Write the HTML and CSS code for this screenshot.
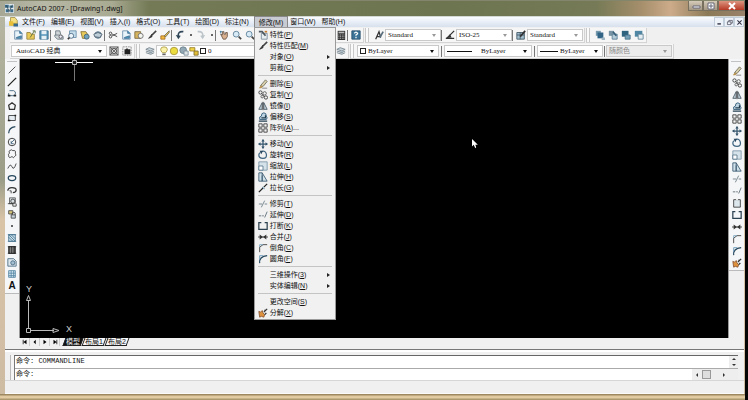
FILE: index.html
```
<!DOCTYPE html>
<html lang="zh-CN">
<head>
<meta charset="utf-8">
<title>AutoCAD 2007 - [Drawing1.dwg]</title>
<link rel="stylesheet" href="styles.css">
</head>
<body>
<svg class="defs" aria-hidden="true">
  <symbol id="new" viewBox="0 0 12 12"><path d="M2 1h6l3 3v7H2z" fill="#e8f3fa" stroke="#6a8caa"/><path d="M8 1v3h3M4 9l6-2v3H4z" fill="#4b9ac0" stroke="#456f90"/></symbol>
  <symbol id="open" viewBox="0 0 12 12"><path d="M1 3h4l1 2h4v6H1z" fill="#e9ca58" stroke="#95803a"/><path d="M5 9l5-8M8 1h3v3" stroke="#536b35" fill="none"/></symbol>
  <symbol id="save" viewBox="0 0 12 12"><path d="M1 1h10v10H1z" fill="#5494b7" stroke="#3c6d8e"/><path d="M3 1h6v4H3zM3 7h6v4H3z" fill="#e4f0f6"/></symbol>
  <symbol id="print" viewBox="0 0 12 12"><path d="M2 6V1h5l1 4M1 6h8l2 2v3H4L1 8z" fill="#d0d5d8" stroke="#65737c"/><circle cx="8" cy="8" r="2" fill="#eef" stroke="#555"/></symbol>
  <symbol id="preview" viewBox="0 0 12 12"><path d="M3 1h8v8H3z" fill="#c7dfed" stroke="#648caa"/><circle cx="5" cy="7" r="3" fill="#ecf5fb" stroke="#47657f"/><path d="M3 9l-2 2" stroke="#333" stroke-width="2"/></symbol>
  <symbol id="publish" viewBox="0 0 12 12"><path d="M1 2h6l2 3v5H3z" fill="#e8cb5a" stroke="#846f30"/><circle cx="8" cy="8" r="3" fill="#6da3bf" stroke="#445e72"/></symbol>
  <symbol id="globe" viewBox="0 0 12 12"><circle cx="6" cy="6" r="4" fill="#8ca6b7" stroke="#567188"/><path d="M1 5l5-2 5 2-3 4-6-1z" fill="#bfcfd9" stroke="#51616f"/></symbol>
  <symbol id="cut" viewBox="0 0 12 12"><path d="M11 4L5 7M11 8L5 5" stroke="#333"/><circle cx="3" cy="4" r="1.5" fill="none" stroke="#333"/><circle cx="3" cy="8" r="1.5" fill="none" stroke="#333"/></symbol>
  <symbol id="paste" viewBox="0 0 12 12"><path d="M1 2h7v8H1z" fill="#d6b35d" stroke="#786640"/><circle cx="8" cy="7" r="3" fill="#f5f5f0" stroke="#666"/></symbol>
  <symbol id="brush" viewBox="0 0 12 12"><path d="M11 1L6 6" stroke="#444" stroke-width="2"/><path d="M6 5L2 10l4-2z" fill="#333" stroke="#333"/></symbol>
  <symbol id="block" viewBox="0 0 12 12"><path d="M1 7h5v4H1z" fill="#f1ba3d" stroke="#a66b24"/><path d="M11 1L5 7l2 1 4-5z" fill="#ebc451" stroke="#665"/></symbol>
  <symbol id="undo" viewBox="0 0 12 12"><path d="M10 2Q3 1 4 8" fill="none" stroke="#30475a" stroke-width="2"/><path d="M1 6l3 5 3-4z" fill="#30475a"/></symbol>
  <symbol id="redo" viewBox="0 0 12 12"><path d="M2 2q7-1 6 6" fill="none" stroke="#bcc4ca" stroke-width="2"/><path d="M5 7l3 4 3-5z" fill="#bcc4ca"/></symbol>
  <symbol id="pan" viewBox="0 0 12 12"><path d="M2 5l2 1V2h2v3h2V3h2v5l-2 3H5z" fill="#d8b08d" stroke="#665448"/><path d="M1 2h3M2 1v3" stroke="#3c7899"/></symbol>
  <symbol id="zoom" viewBox="0 0 12 12"><circle cx="5" cy="5" r="3.5" fill="#d7eaf5" stroke="#577b94"/><path d="M8 8l3 3" stroke="#444" stroke-width="2"/></symbol>
  <symbol id="calc" viewBox="0 0 12 12"><path d="M2 1h9v11H2z" fill="#333"/><path d="M3 3h7" stroke="#bbb" stroke-width="2"/><path d="M3 6h7M3 8h7M3 10h7" stroke="#ddd" stroke-dasharray="1 1"/></symbol>
  <symbol id="help" viewBox="0 0 12 12"><path d="M1 1h10v10H1z" fill="#3b7398" stroke="#274e6b"/><path d="M4 4q2-3 4 0 0 1-2 2v1M6 8v2" fill="none" stroke="#fff" stroke-width="1.5"/></symbol>
  <symbol id="style" viewBox="0 0 12 12"><path d="M2 11L6 2l2 7M3 8h4" fill="none" stroke="#333" stroke-width="1.5"/><path d="M11 2L7 9" stroke="#556b79" stroke-width="2"/></symbol>
  <symbol id="dim" viewBox="0 0 12 12"><path d="M11 1L5 7M1 10h10" stroke="#333" stroke-width="1.5"/><path d="M1 10l5-5 2 4z" fill="#333"/></symbol>
  <symbol id="tstyle" viewBox="0 0 12 12"><path d="M1 3h9v8H1zM1 6h9M5 3v8" fill="#a3bfce" stroke="#3d5361"/><path d="M11 1L5 8" stroke="#333" stroke-width="2"/></symbol>
  <symbol id="order1" viewBox="0 0 12 12"><path d="M1 1h6v6H1z" fill="#7599ad"/><path d="M3 3h7v7H3z" fill="#326486"/><path d="M8 9h4v3H8z" fill="#9fb5c1"/></symbol>
  <symbol id="order2" viewBox="0 0 12 12"><path d="M1 1h6v6H1z" fill="#7894a4"/><path d="M5 5h6v6H5z" fill="#b4cbd8" stroke="#547991"/><path d="M6 2l4 5" stroke="#355e79" stroke-width="2"/></symbol>
  <symbol id="order3" viewBox="0 0 12 12"><path d="M1 1h8v7H1z" fill="#2e627f"/><path d="M5 6h6v5H5z" fill="#75a0b7" stroke="#456d87"/></symbol>
  <symbol id="order4" viewBox="0 0 12 12"><path d="M1 1h9v7H1z" fill="#4f87a5"/><path d="M5 5h6v6H5z" fill="#e4edf1" stroke="#5b8095"/></symbol>
  <symbol id="gear" viewBox="0 0 12 12"><path d="M1 1h10v10H1z" fill="#bbb" stroke="#666"/><circle cx="6" cy="6" r="3" fill="#eee" stroke="#333"/><path d="M1 1l10 10M11 1L1 11" stroke="#555"/></symbol>
  <symbol id="wsave" viewBox="0 0 12 12"><path d="M1 1h10v10H1z" fill="none" stroke="#555" stroke-dasharray="1 1"/><path d="M3 4h2V3h2v1h3v6H3z" fill="#222"/></symbol>
  <symbol id="layers" viewBox="0 0 12 12"><path d="M1 4l4-2 6 2-4 2zM1 6l6 2 4-2M1 8l6 2 4-2" fill="#c8d4db" stroke="#73828c"/></symbol>
  <symbol id="bulb" viewBox="0 0 12 12"><path d="M4 8Q2 6 2 4q0-3 4-3t4 3q0 2-2 4z" fill="#fbf2a9" stroke="#a69843"/><path d="M4 10h4" stroke="#666" stroke-width="2"/></symbol>
  <symbol id="sun" viewBox="0 0 12 12"><circle cx="6" cy="6" r="4.5" fill="#eadb40" stroke="#a59335"/></symbol>
  <symbol id="freeze" viewBox="0 0 12 12"><circle cx="5" cy="5" r="4" fill="#93a9b5" stroke="#6b7f89"/><path d="M6 6h5v5H6z" fill="#dde4e8" stroke="#7a8d98"/></symbol>
  <symbol id="lock" viewBox="0 0 12 12"><path d="M1 2h6v4H1z" fill="#f0d547" stroke="#987b26"/><path d="M6 6h5v5H6z" fill="#e1bd39" stroke="#7c6a2a"/></symbol>
  <symbol id="line" viewBox="0 0 12 12"><path d="M2 10l8-8" stroke="#333"/></symbol>
  <symbol id="xline" viewBox="0 0 12 12"><path d="M1 11L11 1" stroke="#222" stroke-width="1.5"/></symbol>
  <symbol id="pline" viewBox="0 0 12 12"><path d="M3 2h5q3 1 2 4T7 8H2V5" fill="none" stroke="#345a75"/><path d="M1 8h3M8 8h3" stroke="#222" stroke-width="2"/></symbol>
  <symbol id="poly" viewBox="0 0 12 12"><path d="M6 2l4 3-1 5H3L2 5z" fill="none" stroke="#333" stroke-width="1.5"/></symbol>
  <symbol id="rect" viewBox="0 0 12 12"><path d="M2 3h8v6H2z" fill="#e5edf2" stroke="#333"/><path d="M1 9h3M9 3h2" stroke="#222" stroke-width="2"/></symbol>
  <symbol id="arc" viewBox="0 0 12 12"><path d="M2 10Q2 3 10 2" fill="none" stroke="#29485d" stroke-width="1.5"/></symbol>
  <symbol id="circle" viewBox="0 0 12 12"><circle cx="6" cy="6" r="4.5" fill="none" stroke="#222"/><path d="M5 7l4-4M5 5v3h3" stroke="#345a75" fill="none"/></symbol>
  <symbol id="cloud" viewBox="0 0 12 12"><path d="M3 2q3-2 4 0 4-1 3 3 2 3-1 4-1 3-3 0-4 3-4-1-1-2 1-3-1-2 0-3z" fill="none" stroke="#333"/></symbol>
  <symbol id="spline" viewBox="0 0 12 12"><path d="M1 9q3-7 5-2t5-4" fill="none" stroke="#333"/></symbol>
  <symbol id="ellipse" viewBox="0 0 12 12"><ellipse cx="6" cy="6" rx="4.5" ry="3" fill="none" stroke="#24465d" stroke-width="1.5"/></symbol>
  <symbol id="earc" viewBox="0 0 12 12"><path d="M1 7q0-4 5-4t5 3q0 3-4 3" fill="none" stroke="#333" stroke-width="1.5"/><path d="M3 7h2v3" stroke="#333" fill="none"/></symbol>
  <symbol id="insert" viewBox="0 0 12 12"><path d="M3 1h7v7H3z" fill="#d8dfe3" stroke="#555"/><circle cx="7" cy="5" r="2.5" fill="none" stroke="#333"/><path d="M1 8h6v3M7 11h4V8" fill="none" stroke="#333"/></symbol>
  <symbol id="make" viewBox="0 0 12 12"><path d="M2 2h5v4H2z" fill="#d5c378" stroke="#444"/><circle cx="8" cy="6" r="2" fill="none" stroke="#333"/><path d="M5 7h5v4H5z" fill="#c7d2d9" stroke="#444"/></symbol>
  <symbol id="dot" viewBox="0 0 12 12"><circle cx="6" cy="6" r="1.2" fill="#333"/></symbol>
  <symbol id="hatch" viewBox="0 0 12 12"><path d="M2 2h8v8H2z" fill="#c9dfeb" stroke="#47738f"/><path d="M2 5l5 5M2 2l8 8M5 2l5 5M1 2h10M1 10h10" stroke="#47738f"/></symbol>
  <symbol id="grad" viewBox="0 0 12 12"><path d="M2 2h8v8H2z" fill="#444" stroke="#222"/><path d="M4 2v8M7 2v8" stroke="#999"/><path d="M1 2h10M1 10h10" stroke="#222"/></symbol>
  <symbol id="region" viewBox="0 0 12 12"><path d="M1 2h7l3 3v6H1z" fill="#dce7ee" stroke="#47687e"/><circle cx="7" cy="7" r="2.5" fill="#a3bfd1" stroke="#47687e"/></symbol>
  <symbol id="table" viewBox="0 0 12 12"><path d="M2 2h8v8H2zM2 5h8M2 8h8M5 2v8M8 2v8" fill="#d9eaf4" stroke="#4f82a1"/></symbol>
  <symbol id="erase" viewBox="0 0 12 12"><path d="M9 1l2 2-5 6-3-1z" fill="#d9d1a9" stroke="#6e6a5c"/><path d="M3 8l3 1-2 2H1z" fill="#b6914e"/><path d="M5 11h6" stroke="#777"/></symbol>
  <symbol id="copy" viewBox="0 0 12 12"><path d="M4 4l4 4" stroke="#555"/><circle cx="3" cy="3" r="2" fill="none" stroke="#333"/><circle cx="8" cy="4" r="2" fill="none" stroke="#555"/><circle cx="5" cy="8" r="1.5" fill="none" stroke="#555"/><circle cx="9.500" cy="9" r="2" fill="none" stroke="#333"/></symbol>
  <symbol id="mirror" viewBox="0 0 12 12"><path d="M5 2v8H1zM7 2v8h4z" fill="#c5d2db" stroke="#445662"/><path d="M6 1v10" stroke="#333"/></symbol>
  <symbol id="offset" viewBox="0 0 12 12"><path d="M2 9q-1-4 2-4 0-4 3-4t3 4q2 2 0 4z" fill="#bfd5e3" stroke="#2c5572"/><path d="M4 7h5V4M1 11h10" fill="none" stroke="#243e50" stroke-width="1.5"/></symbol>
  <symbol id="array" viewBox="0 0 12 12"><path d="M1 1h4v4H1zM7 1h4v4H7zM1 7h4v4H1zM7 7h4v4H7z" fill="none" stroke="#333"/></symbol>
  <symbol id="move" viewBox="0 0 12 12"><path d="M6 1v10M1 6h10" stroke="#37576e" stroke-width="1.500"/><path d="M6 0l2 3H4zM6 12l2-3H4zM0 6l3-2v4zM12 6L9 4v4z" fill="#37576e"/></symbol>
  <symbol id="rotate" viewBox="0 0 12 12"><path d="M4 2q5-2 6 3t-4 5-5-4q0-2 2-3" fill="none" stroke="#3e6580" stroke-width="1.500"/><path d="M2 1h4L4 5z" fill="#28495f"/></symbol>
  <symbol id="scale" viewBox="0 0 12 12"><path d="M1 1h10v10H1z" fill="#d6e2ea" stroke="#7894a5"/><path d="M1 6h5v5H1z" fill="#fff" stroke="#56758a"/></symbol>
  <symbol id="stretch" viewBox="0 0 12 12"><path d="M1 1h4v10H1zM5 1l6 10H5V4" fill="#d1e1ea" stroke="#35566c"/></symbol>
  <symbol id="lengthen" viewBox="0 0 12 12"><path d="M1 11l5-5M7 5l4-4" stroke="#222" stroke-width="1.500"/><path d="M5 5l3 2" stroke="#4179a0"/></symbol>
  <symbol id="trim" viewBox="0 0 12 12"><path d="M1 6h4M8 6h3M4 10l4-8" stroke="#667782"/></symbol>
  <symbol id="extend" viewBox="0 0 12 12"><path d="M1 7h3M5 7h2M8 9l3-7" stroke="#536470"/></symbol>
  <symbol id="breakpt" viewBox="0 0 12 12"><path d="M2 2h8v9H2z" fill="#dce7ed" stroke="#333"/><path d="M5 2h2" stroke="#fff" stroke-width="1.500"/></symbol>
  <symbol id="break" viewBox="0 0 12 12"><path d="M4 2H1v8h10V2H8" fill="none" stroke="#2d4250" stroke-width="1.500"/></symbol>
  <symbol id="join" viewBox="0 0 12 12"><path d="M0 6h12" stroke="#333"/><path d="M2 3l4 3-4 3zM10 3L6 6l4 3z" fill="#333"/></symbol>
  <symbol id="chamfer" viewBox="0 0 12 12"><path d="M2 11V5l4-3h5" fill="none" stroke="#333"/><path d="M2 5V2h4" fill="none" stroke="#72a0bd"/></symbol>
  <symbol id="fillet" viewBox="0 0 12 12"><path d="M2 11Q1 3 11 2" fill="none" stroke="#26485d" stroke-width="1.500"/><path d="M2 7V2h4" fill="none" stroke="#5c91b5"/></symbol>
  <symbol id="explode" viewBox="0 0 12 12"><path d="M1 4l2 1 2-2 1 3 2 2-1 3-3-1-2 1z" fill="#df923e" stroke="#865332"/><path d="M7 5l4-4M8 8l2-2M8 2l1 2" stroke="#333" stroke-width="1.500"/></symbol>
  <symbol id="props" viewBox="0 0 12 12"><path d="M4 4h7v7H4z" fill="#e9eef1" stroke="#748796"/><path d="M1 2h4l4 5" fill="none" stroke="#4e5860" stroke-width="2"/><path d="M8 2h3" stroke="#c87b31" stroke-width="2"/></symbol>
</svg>

<div class="window">
  <header class="title">
    <svg class="app" viewBox="0 0 12 12" aria-hidden="true"><path d="M0 0h12v12H0z" fill="#e0e8ec"/><path d="M0 1h5v4H0zM6 2h5v3H6zM1 7h4v4H1zM7 7h4v4H7z" fill="#3a6c8a"/><path d="M2 2l3 7M10 1L5 11" stroke="#283d4c"/></svg>
    <h1>AutoCAD 2007 - [Drawing1.dwg]</h1>
    <div class="winbtns">
      <button aria-label="最小化"><svg viewBox="0 0 12 8"><path d="M3 4h7v2H3z" fill="#fff" stroke="#667"/></svg></button>
      <button aria-label="还原"><svg viewBox="0 0 12 8"><path d="M3 1h6v6H3zM5 3h2v2H5z" fill="#fff" stroke="#667"/></svg></button>
      <button class="close" aria-label="关闭"><svg viewBox="0 0 12 8"><path d="M3 1l6 6M9 1L3 7" stroke="#fff" stroke-width="2"/></svg></button>
    </div>
  </header>

  <div class="frame">
    <nav class="menubar">
      <svg class="doc" viewBox="0 0 12 12" aria-hidden="true"><path d="M2 0h6l3 4v6H2z" fill="#f3df82" stroke="#9a8740"/><path d="M0 5h5l1 2h5v4H0z" fill="#e8bf37"/><path d="M6 8h6v4H6z" fill="#38698a"/></svg>
      <button>文件(F)</button><button>编辑(E)</button><button>视图(V)</button><button>插入(I)</button><button>格式(O)</button><button>工具(T)</button><button>绘图(D)</button><button>标注(N)</button>
      <div class="opened">
        <button class="active" aria-expanded="true">修改(M)</button>
        <div class="menu" role="menu">
          <button role="menuitem"><svg><use href="#props"/></svg><span>特性(<u>P</u>)</span></button>
          <button role="menuitem"><svg><use href="#brush"/></svg><span>特性匹配(<u>M</u>)</span></button>
          <button role="menuitem" class="sub"><span>对象(<u>O</u>)</span></button>
          <button role="menuitem" class="sub"><span>剪裁(<u>C</u>)</span></button>
          <hr>
          <button role="menuitem"><svg><use href="#erase"/></svg><span>删除(<u>E</u>)</span></button>
          <button role="menuitem"><svg><use href="#copy"/></svg><span>复制(<u>Y</u>)</span></button>
          <button role="menuitem"><svg><use href="#mirror"/></svg><span>镜像(<u>I</u>)</span></button>
          <button role="menuitem"><svg><use href="#offset"/></svg><span>偏移(<u>S</u>)</span></button>
          <button role="menuitem"><svg><use href="#array"/></svg><span>阵列(<u>A</u>)...</span></button>
          <hr>
          <button role="menuitem"><svg><use href="#move"/></svg><span>移动(<u>V</u>)</span></button>
          <button role="menuitem"><svg><use href="#rotate"/></svg><span>旋转(<u>R</u>)</span></button>
          <button role="menuitem"><svg><use href="#scale"/></svg><span>缩放(<u>L</u>)</span></button>
          <button role="menuitem"><svg><use href="#stretch"/></svg><span>拉伸(<u>H</u>)</span></button>
          <button role="menuitem"><svg><use href="#lengthen"/></svg><span>拉长(<u>G</u>)</span></button>
          <hr>
          <button role="menuitem"><svg><use href="#trim"/></svg><span>修剪(<u>T</u>)</span></button>
          <button role="menuitem"><svg><use href="#extend"/></svg><span>延伸(<u>D</u>)</span></button>
          <button role="menuitem"><svg><use href="#break"/></svg><span>打断(<u>K</u>)</span></button>
          <button role="menuitem"><svg><use href="#join"/></svg><span>合并(<u>J</u>)</span></button>
          <button role="menuitem"><svg><use href="#chamfer"/></svg><span>倒角(<u>C</u>)</span></button>
          <button role="menuitem"><svg><use href="#fillet"/></svg><span>圆角(<u>F</u>)</span></button>
          <hr>
          <button role="menuitem" class="sub"><span>三维操作(<u>3</u>)</span></button>
          <button role="menuitem" class="sub"><span>实体编辑(<u>N</u>)</span></button>
          <hr>
          <button role="menuitem"><span>更改空间(<u>S</u>)</span></button>
          <button role="menuitem"><svg><use href="#explode"/></svg><span>分解(<u>X</u>)</span></button>
        </div>
      </div>
      <button>窗口(W)</button><button>帮助(H)</button>
      <div class="docbtns">
        <button aria-label="最小化文档"><svg viewBox="0 0 10 10"><path d="M2 7h5" stroke="#334" stroke-width="2"/></svg></button>
        <button aria-label="还原文档"><svg viewBox="0 0 10 10"><path d="M4 4V2h5v4H7M2 4h5v4H2z" fill="none" stroke="#445"/></svg></button>
        <button aria-label="关闭文档"><svg viewBox="0 0 10 10"><path d="M2 2l6 6M8 2L2 8" stroke="#334" stroke-width="1.500"/></svg></button>
      </div>
    </nav>

    <div class="row">
      <div class="bar standard">
        <button aria-label="新建"><svg><use href="#new"/></svg></button><button aria-label="打开"><svg><use href="#open"/></svg></button><button aria-label="保存"><svg><use href="#save"/></svg></button><i></i>
        <button aria-label="打印"><svg><use href="#print"/></svg></button><button aria-label="打印预览"><svg><use href="#preview"/></svg></button><button aria-label="发布"><svg><use href="#publish"/></svg></button><button aria-label="三维 DWF"><svg><use href="#globe"/></svg></button><i></i>
        <button aria-label="剪切"><svg><use href="#cut"/></svg></button><button aria-label="复制"><svg><use href="#new"/></svg></button><button aria-label="粘贴"><svg><use href="#paste"/></svg></button><button aria-label="特性匹配"><svg><use href="#brush"/></svg></button><button aria-label="块编辑器"><svg><use href="#block"/></svg></button><i></i>
        <button aria-label="放弃"><svg><use href="#undo"/></svg></button><button class="drop" aria-label="放弃列表"><svg><use href="#dot"/></svg></button><button aria-label="重做"><svg><use href="#redo"/></svg></button><button class="drop" aria-label="重做列表"><svg><use href="#dot"/></svg></button><i></i>
        <button aria-label="平移"><svg><use href="#pan"/></svg></button><button aria-label="实时缩放"><svg><use href="#zoom"/></svg></button><button aria-label="窗口缩放"><svg><use href="#zoom"/></svg></button><button aria-label="缩放上一个"><svg><use href="#zoom"/></svg></button><button aria-label="特性"><svg><use href="#props"/></svg></button><button aria-label="设计中心"><svg><use href="#table"/></svg></button><button aria-label="工具选项板"><svg><use href="#region"/></svg></button><button aria-label="图纸集"><svg><use href="#preview"/></svg></button><button aria-label="标记集"><svg><use href="#paste"/></svg></button><button aria-label="计算器"><svg><use href="#calc"/></svg></button><i></i>
        <button aria-label="帮助"><svg><use href="#help"/></svg></button>
      </div>
      <div class="bar grip">
        <button aria-label="文字样式管理"><svg><use href="#style"/></svg></button><span class="combo"><select aria-label="文字样式"><option>Standard</option></select></span><i></i>
        <button aria-label="标注样式管理"><svg><use href="#dim"/></svg></button><span class="combo"><select aria-label="标注样式"><option>ISO-25</option></select></span><i></i>
        <button aria-label="表格样式管理"><svg><use href="#tstyle"/></svg></button><span class="combo"><select aria-label="表格样式"><option>Standard</option></select></span>
      </div>
      <div class="bar grip">
        <button aria-label="前置"><svg><use href="#order1"/></svg></button><button aria-label="后置"><svg><use href="#order2"/></svg></button><button aria-label="置于对象之上"><svg><use href="#order3"/></svg></button><button aria-label="置于对象之下"><svg><use href="#order4"/></svg></button>
      </div>
    </div>

    <div class="row">
      <div class="bar">
        <span class="combo strong workspace"><select aria-label="工作空间"><option>AutoCAD 经典</option></select></span>
        <button aria-label="工作空间设置"><svg><use href="#gear"/></svg></button><button aria-label="我的工作空间"><svg><use href="#wsave"/></svg></button>
      </div>
      <div class="bar grip">
        <button aria-label="图层特性"><svg><use href="#layers"/></svg></button>
        <span class="combo strong layer"><svg><use href="#bulb"/></svg><svg><use href="#sun"/></svg><svg><use href="#freeze"/></svg><svg><use href="#lock"/></svg><b class="swatch"></b><select aria-label="图层"><option>0</option></select></span>
        <button aria-label="上一个图层"><svg><use href="#layers"/></svg></button>
      </div>
      <div class="bar grip">
        <span class="combo strong color"><b class="swatch"></b><select aria-label="颜色"><option>ByLayer</option></select></span><i></i>
        <span class="combo strong linetype"><b class="rule"></b><select aria-label="线型"><option>ByLayer</option></select></span><i></i>
        <span class="combo strong weight"><b class="rule"></b><select aria-label="线宽"><option>ByLayer</option></select></span><i></i>
        <span class="combo off"><select aria-label="打印样式" disabled><option>随颜色</option></select></span>
      </div>
    </div>

    <main class="work">
      <aside class="tools">
        <button aria-label="直线"><svg><use href="#line"/></svg></button><button aria-label="构造线"><svg><use href="#xline"/></svg></button><button aria-label="多段线"><svg><use href="#pline"/></svg></button><button aria-label="正多边形"><svg><use href="#poly"/></svg></button><button aria-label="矩形"><svg><use href="#rect"/></svg></button><button aria-label="圆弧"><svg><use href="#arc"/></svg></button><button aria-label="圆"><svg><use href="#circle"/></svg></button><button aria-label="修订云线"><svg><use href="#cloud"/></svg></button><button aria-label="样条曲线"><svg><use href="#spline"/></svg></button><button aria-label="椭圆"><svg><use href="#ellipse"/></svg></button><button aria-label="椭圆弧"><svg><use href="#earc"/></svg></button><button aria-label="插入块"><svg><use href="#insert"/></svg></button><button aria-label="创建块"><svg><use href="#make"/></svg></button><button aria-label="点"><svg><use href="#dot"/></svg></button><button aria-label="图案填充"><svg><use href="#hatch"/></svg></button><button aria-label="渐变色"><svg><use href="#grad"/></svg></button><button aria-label="面域"><svg><use href="#region"/></svg></button><button aria-label="表格"><svg><use href="#table"/></svg></button><button class="text" aria-label="多行文字">A</button>
      </aside>
      <section class="center">
        <div class="canvas">
          <svg class="cross" viewBox="0 0 38 24" aria-hidden="true"><path d="M0 3.500h38" stroke="#fff"/><path d="M19.500 0v22" stroke="#777"/><path d="M17.500 1.500h4v4h-4z" fill="#222" stroke="#bbb"/></svg>
          <svg class="pointer" viewBox="0 0 8 12" aria-hidden="true"><path d="M1 0v9l2-2 2 4 1-1-1-3h3z" fill="#fff"/></svg>
          <div class="ucs">
            <span>Y</span>
            <svg viewBox="0 0 36 40" aria-hidden="true"><path d="M3.500 34V7M6 36.500h23M1.500 34.500h4v4h-4zM3.500 1.500l-2 5h4zM34 36.500l-6-2v4z" fill="none" stroke="#bbb"/></svg>
            <span>X</span>
          </div>
        </div>
        <div class="tabs">
          <button class="step" aria-label="第一个"><svg viewBox="0 0 8 8"><path d="M1 1h1v6H1zM6 1v6L2 4z"/></svg></button>
          <button class="step" aria-label="上一个"><svg viewBox="0 0 8 8"><path d="M5 1v6L2 4z"/></svg></button>
          <button class="step" aria-label="下一个"><svg viewBox="0 0 8 8"><path d="M2 1v6l4-3z"/></svg></button>
          <button class="step" aria-label="最后一个"><svg viewBox="0 0 8 8"><path d="M6 1h1v6H6zM2 1v6l4-3z"/></svg></button>
          <button class="tab on">模型</button><button class="tab">布局1</button><button class="tab">布局2</button>
        </div>
      </section>
      <aside class="tools right">
        <button aria-label="删除"><svg><use href="#erase"/></svg></button><button aria-label="复制对象"><svg><use href="#copy"/></svg></button><button aria-label="镜像"><svg><use href="#mirror"/></svg></button><button aria-label="偏移"><svg><use href="#offset"/></svg></button><button aria-label="阵列"><svg><use href="#array"/></svg></button><button aria-label="移动"><svg><use href="#move"/></svg></button><button aria-label="旋转"><svg><use href="#rotate"/></svg></button><button aria-label="缩放"><svg><use href="#scale"/></svg></button><button aria-label="拉伸"><svg><use href="#stretch"/></svg></button><button aria-label="修剪"><svg><use href="#trim"/></svg></button><button aria-label="延伸"><svg><use href="#extend"/></svg></button><button aria-label="打断于点"><svg><use href="#breakpt"/></svg></button><button aria-label="打断"><svg><use href="#break"/></svg></button><button aria-label="合并"><svg><use href="#join"/></svg></button><button aria-label="倒角"><svg><use href="#chamfer"/></svg></button><button aria-label="圆角"><svg><use href="#fillet"/></svg></button><button aria-label="分解"><svg><use href="#explode"/></svg></button>
      </aside>
    </main>

    <section class="command">
      <div class="lines">
        <div class="history"><p>命令: COMMANDLINE</p><div class="vscroll"><button aria-label="向上滚动"></button><button class="down" aria-label="向下滚动"></button></div></div>
        <div class="prompt"><label for="cmd">命令:</label><input id="cmd" type="text" autocomplete="off"><div class="hscroll"><button aria-label="向左滚动"></button><span></span><button class="fwd" aria-label="向右滚动"></button></div></div>
      </div>
    </section>
    <footer class="status"></footer>
  </div>
</div>
</body>
</html>
```

FILE: styles.css
```
* { box-sizing: border-box; }
body {
  margin: 0;
  background: #050505;
  color: #111;
  font: 7px/10px "Liberation Sans", "Noto Sans CJK SC", sans-serif;
}
button, select, input {
  margin: 0;
  padding: 0;
  border: 0;
  border-radius: 0;
  background: none;
  color: inherit;
  font: inherit;
}
h1, p { margin: 0; font: inherit; }
svg { display: block; }
.defs { position: absolute; width: 0; height: 0; }

.window {
  display: flex;
  flex-direction: column;
  height: 100vh;
  margin-right: 3px;
  padding: 0 1px 6px 5px;
  background:
    linear-gradient(#8d7850, #f0d9b0 50%, #a08c62) bottom / 100% 6px no-repeat,
    linear-gradient(#b9b9a5, #9b9d87 45%, #d9c4a8 55%, #cdbba2);
}

/* Title bar */
.title {
  display: flex;
  align-items: center;
  flex: none;
  height: 17px;
  margin: 0 -1px 0 -5px;
  padding-left: 5px;
  border-top: 1px solid #84866c;
  border-bottom: 1px solid #d3d8d4;
  background: linear-gradient(90deg, #a6a895, #b7b8a5 6%, #a9aa92 15%, #737a55 20%, #6c7450 60%, #767a56 80%, #a58e6b 86%, #ccab8a 90%, #8b7a58 95%, #99826a);
}
.app { width: 9px; height: 9px; }
.title h1 {
  flex: 1;
  padding-left: 3px;
  color: #111;
  font-family: "Noto Sans", sans-serif;
}
.winbtns { display: flex; align-self: flex-start; }
.winbtns button {
  display: grid;
  place-items: center;
  width: 15px;
  height: 10px;
  border: 1px solid #77705f;
  border-top: 0;
  background: linear-gradient(#d5cbb9, #a49883);
}
.winbtns .close { width: 27px; background: linear-gradient(#dc9480, #b83a25); }
.winbtns svg { width: 12px; height: 8px; }

.frame {
  display: flex;
  flex: 1;
  flex-direction: column;
  min-height: 0;
  background: #f0f0f0;
}

/* Menu bar */
.menubar {
  display: flex;
  flex: none;
  height: 10px;
  padding-left: 4px;
  background: linear-gradient(#fafcfe, #d7e0ee);
}
.doc { width: 9px; height: 10px; margin-right: 1px; }
.menubar button { padding: 0 3px; white-space: nowrap; }
.opened { position: relative; margin-left: 3px; }
.menubar .active {
  height: 10px;
  padding: 0 4px;
  line-height: 9px;
  outline: 1px solid #888;
  background: #c8ccd2;
}
.docbtns { display: flex; margin-left: auto; }
.docbtns button {
  display: grid;
  place-items: center;
  width: 10px;
  padding: 0;
  border: 1px solid #c3cedb;
  background: #eef3fa;
}
.docbtns svg { width: 7px; height: 7px; }

.menu {
  position: absolute;
  z-index: 5;
  top: 100%;
  left: -1px;
  width: 82px;
  padding: 1px 2px;
  border: 1px solid #9a9a9a;
  background: #f1f1f1;
}
.menu button {
  display: grid;
  grid-template-columns: 10px 1fr 5px;
  align-items: center;
  column-gap: 2px;
  width: 100%;
  height: 11px;
  padding: 0 1px;
  line-height: 11px;
  text-align: left;
}
.menu span { grid-column: 2; }
.menu svg { width: 10px; height: 10px; }
.sub::after {
  content: "";
  grid-column: 3;
  justify-self: start;
  border: 2px solid transparent;
  border-left: 3px solid #222;
  border-right: 0;
}
.menu hr {
  height: 1px;
  margin: 2px 1px;
  border: 0;
  background: #c4c4c4;
}

/* Toolbars */
.row { display: flex; flex: none; gap: 1px; height: 16px; padding-left: 5px; }
.bar {
  display: flex;
  align-items: center;
  height: 15px;
  margin-top: 1px;
  padding: 0 1px;
  border: 1px solid #d4d4d4;
  border-width: 0 1px 1px 0;
  background: #f6f6f6;
}
.grip { padding-left: 6px; border-left: 1px solid #c8c8c8; box-shadow: inset 2px 0 #fafafa, inset 3px 0 #c8c8c8; }
.bar button { display: grid; flex: none; place-items: center; width: 13px; height: 13px; }
.bar button svg, .combo svg { width: 10px; height: 10px; }
.bar .drop { width: 8px; }
.bar i { flex: none; width: 1px; height: 11px; margin: 0 1px 0 0; background: #777; }
.combo {
  display: flex;
  align-items: center;
  width: 56px;
  height: 12px;
  padding: 0 4px 0 2px;
  border: 1px solid #c9c9c9;
  background: #fff;
  font-family: "Liberation Serif", "Noto Sans CJK SC", serif;
}
.combo select { flex: 1; min-width: 0; height: 10px; appearance: none; opacity: 1; }
.combo::after {
  content: "";
  border: 2px solid transparent;
  border-top: 3px solid #999;
  border-bottom: 0;
}
.strong::after { border-top-color: #111; }
.bar .workspace { width: 96px; padding-left: 4px; }
.bar .layer { width: 178px; }
.bar .color { width: 82px; margin-right: 2px; }
.bar .linetype { width: 88px; margin: 0 2px 0 1px; }
.bar .weight { width: 66px; margin: 0 1px; }
.bar .off { width: 66px; background: #ececec; color: #888; }
.swatch { width: 6px; height: 6px; margin: 0 2px 0 1px; border: 1px solid #222; background: #fff; }
.color .swatch { margin-left: 0; }
.rule { width: 25px; height: 1px; margin-right: 9px; background: #111; }
.weight .rule { width: 18px; margin-right: 2px; }

/* Drawing area */
.work { display: flex; flex: 1; min-height: 0; }
.tools {
  flex: none;
  align-self: flex-start;
  width: 14px;
  padding: 5px 0 1px;
  border-bottom: 1px solid #bbb;
  background: linear-gradient(#c2c2c2, #c2c2c2) 2px 2px / 10px 1px no-repeat, #f5f6f7;
}
.tools button { display: grid; place-items: center; width: 100%; height: 12px; }
.tools svg { width: 10px; height: 10px; }
.tools .text { font-size: 10px; font-weight: bold; }
.tools.right { width: 15px; padding-top: 6px; }
.center { display: flex; flex: 1; flex-direction: column; min-width: 0; }
.canvas {
  position: relative;
  flex: 1;
  border: solid #9a9a9a;
  border-width: 0 1px;
  background: #000;
}
.cross { position: absolute; top: 0; left: 35px; width: 38px; height: 24px; }
.pointer { position: absolute; top: 80px; left: 451px; width: 7px; height: 10px; }
.ucs {
  position: absolute;
  bottom: 4px;
  left: 5px;
  display: grid;
  grid-template-columns: 36px 8px;
  column-gap: 5px;
  align-items: end;
  color: #ccc;
  font-size: 9px;
}
.ucs span:first-child { grid-column: 1 / 3; padding-left: 1px; }
.ucs svg { width: 36px; height: 40px; }
.tabs { display: flex; flex: none; height: 8px; padding-left: 1px; }
.step { display: grid; place-items: center; width: 10px; height: 8px; border-right: 1px solid #ccc; }
.step svg { width: 6px; height: 6px; }
.tab {
  position: relative;
  z-index: 0;
  height: 8px;
  margin-left: 3px;
  padding: 0 1px;
  line-height: 8px;
}
.step + .tab { margin-left: 5px; }
.tab::before {
  content: "";
  position: absolute;
  inset: 0 -1px;
  z-index: -1;
  border: 1px solid #222;
  border-top: 0;
  background: #f8f8f8;
  transform: skewX(-20deg);
}
.on { color: #eee; }
.on::before { background: #111; }

/* Command line */
.command {
  flex: none;
  margin-top: 3px;
  padding: 5px 6px 0 4px;
  border-top: 1px solid #777;
  box-shadow: inset 0 2px #fff;
}
.lines {
  margin-left: 5px;
  border-top: 1px solid #666;
  border-left: 1px solid #777;
  background: #fff;
  box-shadow: -3px 0 #f5f5f5, -4px 0 #bbb;
  font-family: "Liberation Mono", "Noto Sans CJK SC", monospace;
}
.history { display: flex; height: 13px; border-bottom: 1px solid #aaa; }
.history p { flex: 1; padding-left: 1px; line-height: 11px; }
.vscroll { display: flex; flex-direction: column; justify-content: space-around; align-items: center; width: 9px; background: #eee; }
.vscroll button { border: 2px solid transparent; border-top: 0; border-bottom: 2px solid #333; }
.vscroll .down { border-bottom: 0; border-top: 2px solid #333; }
.prompt { display: flex; height: 11px; line-height: 11px; }
.prompt label { padding-left: 1px; }
.prompt input { flex: 1; min-width: 0; padding: 0 2px; outline: 0; }
.hscroll { display: flex; align-items: center; width: 46px; padding: 0 13px 0 4px; background: #eee; }
.hscroll button { border: 2px solid transparent; border-left: 0; border-right: 2px solid #333; }
.hscroll span { width: 9px; height: 9px; margin: 0 auto 0 4px; border: 1px solid #999; background: #ddd; }
.hscroll .fwd { border-right: 0; border-left: 2px solid #333; }
.status { flex: none; height: 14px; border-top: 1px solid #d6d6d6; border-bottom: 1px solid #fafafa; }
```
